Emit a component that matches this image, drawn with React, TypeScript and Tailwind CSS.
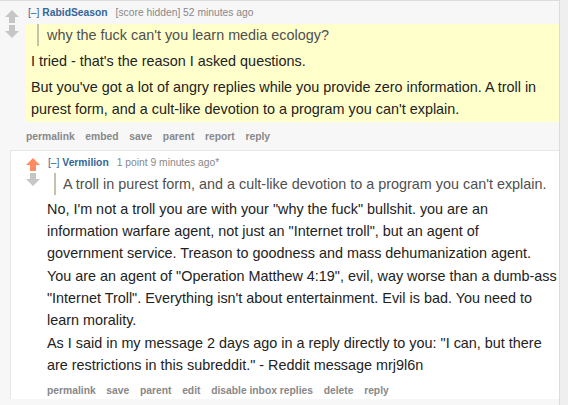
import React from 'react';

type ArrowProps = { dir: 'up' | 'down'; color: string };

function Arrow({ dir, color }: ArrowProps) {
  return (
    <svg width="14" height="13" viewBox="0 0 14 13" className={dir === 'down' ? 'rotate-180' : ''}>
      <path d="M7 0 L14 7 L10 7 L10 13 L4 13 L4 7 L0 7 Z" fill={color} />
    </svg>
  );
}

const PARENT_BUTTONS = ['permalink', 'embed', 'save', 'parent', 'report', 'reply'];
const CHILD_BUTTONS = ['permalink', 'save', 'parent', 'edit', 'disable inbox replies', 'delete', 'reply'];

function Buttons({ items }: { items: string[] }) {
  return (
    <ul className="flex gap-[10.7px] text-[10.3px] leading-[16px] font-bold text-[#888]">
      {items.map((b) => (
        <li key={b}>{b}</li>
      ))}
    </ul>
  );
}

export default function App() {
  return (
    <div className="flex h-[405px] w-[568px] overflow-hidden bg-[#efefef] font-['Liberation_Sans',Arial,sans-serif]">
      <div className="w-[560px] shrink-0 border-r border-t border-[#dcdcdc] bg-[#f7f7f8]">
        {/* Parent comment */}
        <div className="flex">
          <div className="flex w-[26px] shrink-0 flex-col gap-[2px] pl-[5px] pt-[9px]">
            <Arrow dir="up" color="#c6c6c6" />
            <Arrow dir="down" color="#c6c6c6" />
          </div>
          <div className="min-w-0 flex-1">
            <p className="pl-[2px] pt-[4px] text-[10.3px] leading-[16px] text-[#888]">
              <span className="text-[#369]">[–]</span>{' '}
              <span className="font-bold text-[#369]">RabidSeason</span>
              <span className="ml-[8px]">[score hidden] 52 minutes ago</span>
            </p>
            <div className="mt-[3px] bg-[#ffffcc] pb-[2px] pl-[5px] pr-[6px] text-[14.4px] leading-[22px] text-[#222]">
              <blockquote className="ml-[6px] border-l-2 border-[#c5c1ad] pl-[8px] text-[#4f4f4f]">
                why the fuck can't you learn media ecology?
              </blockquote>
              <p className="mt-[4px]">I tried - that's the reason I asked questions.</p>
              <p className="mt-[4px]">
                But you've got a lot of angry replies while you provide zero information. A troll in purest form, and a
                cult-like devotion to a program you can't explain.
              </p>
            </div>
            <div className="pt-[7px]">
              <Buttons items={PARENT_BUTTONS} />
            </div>
          </div>
        </div>

        {/* Child comment */}
        <div className="ml-[10px] mt-[5px] flex border-l border-t border-[#e6e6e6] bg-white">
          <div className="flex w-[36px] shrink-0 flex-col gap-[2px] pl-[15px] pt-[7px]">
            <Arrow dir="up" color="#ff8b60" />
            <Arrow dir="down" color="#c6c6c6" />
          </div>
          <div className="min-w-0 flex-1">
            <p className="pl-[1px] pt-[4px] text-[10.3px] leading-[16px] text-[#888]">
              <span className="text-[#369]">[–]</span>{' '}
              <span className="font-bold text-[#369]">Vermilion</span>
              <span className="ml-[8px]">1 point 9 minutes ago*</span>
            </p>
            <div className="-mr-[2px] text-[14.4px] leading-[22px] text-[#222]">
              <blockquote className="ml-[7px] mt-[2px] border-l-2 border-[#c5c1ad] pl-[7px] text-[#4f4f4f]">
                A troll in purest form, and a cult-like devotion to a program you can't explain.
              </blockquote>
              <p className="mt-[3px] pr-[6px]">
                No, I'm not a troll you are with your "why the fuck" bullshit. you are an information warfare agent, not
                just an "Internet troll", but an agent of government service. Treason to goodness and mass
                dehumanization agent.
              </p>
              <p className="mt-[1px]">
                You are an agent of "Operation Matthew 4:19", evil, way worse than a dumb-ass "Internet Troll".
                Everything isn't about entertainment. Evil is bad. You need to learn morality.
              </p>
              <p className="mt-[1px]">
                As I said in my message 2 days ago in a reply directly to you: "I can, but there are restrictions in
                this subreddit." - Reddit message mrj9l6n
              </p>
            </div>
            <div className="pt-[7px]">
              <Buttons items={CHILD_BUTTONS} />
            </div>
          </div>
        </div>
      </div>
    </div>
  );
}
